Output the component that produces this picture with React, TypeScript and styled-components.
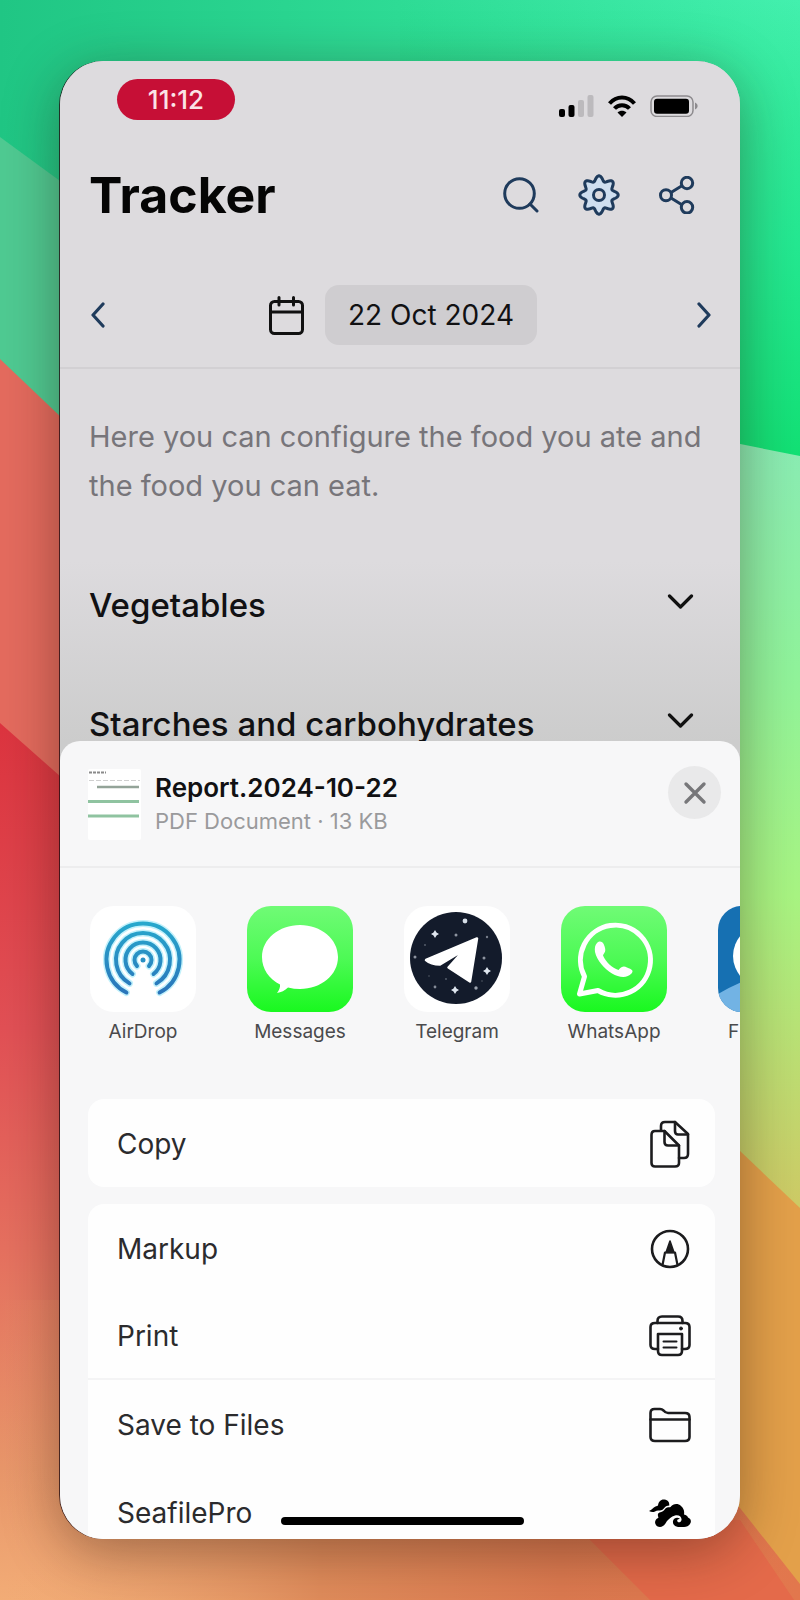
import React from 'react';
import styled, { createGlobalStyle } from 'styled-components';

const GlobalStyle = createGlobalStyle`
  *, *::before, *::after { box-sizing: border-box; }
  body {
    margin: 0;
    font-family: Inter, "Liberation Sans", sans-serif;
    color: #111113;
  }
  button { font: inherit; color: inherit; background: none; border: 0; padding: 0; }
  svg { display: block; flex: none; }
`;

/* ---------- page and wallpaper ---------- */

const Page = styled.div`
  position: relative;
  display: flex;
  height: 100vh;
  padding: 61px 60px;
  overflow: hidden;
`;

const WallpaperSvg = styled.svg`
  position: absolute;
  inset: 0;
  width: 100%;
  height: 100%;
`;

const Phone = styled.main`
  position: relative;
  flex: 1;
  min-width: 0;
  display: flex;
  flex-direction: column;
  overflow: hidden;
  border-radius: 44px;
  background: #dddbde;
  box-shadow: -1px 0 0 rgba(30, 10, 15, 0.75), 0 12px 56px rgba(40, 20, 10, 0.4);
`;

/* ---------- dimmed app screen ---------- */

const Screen = styled.section`
  flex: none;
  background: linear-gradient(#dddbde 0, #dddbde 500px, #cccccc 680px);
`;

const StatusBar = styled.header`
  display: flex;
  align-items: center;
  justify-content: space-between;
  padding: 18px 42px 0 57px;
`;

const TimePill = styled.div`
  width: 118px;
  height: 41px;
  border-radius: 21px;
  background: #c60f36;
  color: #fbe3e6;
  font-size: 26px;
  font-weight: 500;
  line-height: 41px;
  text-align: center;
`;

const StatusIcons = styled.div`
  display: flex;
  align-items: center;
  gap: 14px;
  padding-top: 12px;
`;

const TitleRow = styled.div`
  display: flex;
  align-items: center;
  justify-content: space-between;
  height: 72px;
  margin-top: 39px;
  padding: 0 45px 0 29px;
`;

const Title = styled.h1`
  margin: 0;
  font-size: 50px;
  font-weight: 700;
  line-height: 60px;
  color: #050505;
`;

const Actions = styled.div`
  display: flex;
  align-items: center;
  gap: 39px;
`;

const IconButton = styled.button`
  display: flex;
  color: #1f3b5c;
`;

const DateRow = styled.div`
  display: flex;
  align-items: center;
  justify-content: space-between;
  height: 106px;
  margin-top: 32px;
  padding: 0 28px 0 30px;
  border-bottom: 2px solid #d2d0d3;
`;

const DateGroup = styled.div`
  display: flex;
  align-items: center;
  gap: 21px;
  padding-left: 4px;
`;

const DateButton = styled.button`
  height: 60px;
  padding: 0 23px;
  border-radius: 14px;
  background: #cfcdd0;
  font-size: 28px;
  line-height: 60px;
`;

const Intro = styled.p`
  margin: 0;
  padding: 43px 20px 0 29px;
  font-size: 29px;
  line-height: 49px;
  color: #77757a;
`;

const Section = styled.button`
  display: flex;
  align-items: center;
  justify-content: space-between;
  width: 100%;
  height: 119px;
  padding: 0 46px 0 29px;
  font-size: 33px;
  font-weight: 500;
  line-height: 40px;
  text-align: left;

  svg { margin-bottom: 6px; }
`;

const Sections = styled.div`
  padding-top: 35px;
`;

/* ---------- share sheet ---------- */

const Sheet = styled.section`
  position: relative;
  flex: 1;
  min-height: 0;
  display: flex;
  flex-direction: column;
  margin-top: -42px;
  border-radius: 20px 20px 0 0;
  background: #f7f7f8;
`;

const SheetHeader = styled.header`
  flex: none;
  display: flex;
  align-items: flex-start;
  height: 127px;
  padding: 25px 19px 0 28px;
  border-bottom: 2px solid #ededee;
`;

const FileInfo = styled.div`
  flex: 1;
  padding-left: 14px;
`;

const FileName = styled.h2`
  margin: 0;
  padding-top: 5px;
  font-size: 26px;
  font-weight: 600;
  line-height: 34px;
`;

const FileMeta = styled.p`
  margin: 0;
  font-size: 22px;
  line-height: 32px;
  color: #9a9a9c;
`;

const Close = styled.button`
  display: grid;
  place-items: center;
  width: 53px;
  height: 53px;
  border-radius: 50%;
  background: #e9e9ea;
  color: #77777a;
`;

const AppRow = styled.nav`
  flex: none;
  display: flex;
  gap: 51px;
  height: 231px;
  padding: 38px 0 0 30px;
  overflow: hidden;
`;

const AppButton = styled.button<{ $cut?: boolean }>`
  flex: none;
  display: flex;
  flex-direction: column;
  align-items: ${(p) => (p.$cut ? 'flex-start' : 'center')};
  width: 106px;
  font-size: 19px;
  line-height: 28px;
  color: #4a4a4c;

  span { padding: 6px 0 0 ${(p) => (p.$cut ? '10px' : '0')}; }
`;

const Group = styled.div<{ $fill?: boolean }>`
  flex: ${(p) => (p.$fill ? '1' : 'none')};
  min-height: 0;
  margin: 0 25px ${(p) => (p.$fill ? '0' : '17px')} 28px;
  border-radius: ${(p) => (p.$fill ? '16px 16px 0 0' : '16px')};
  background: #fefefe;
  overflow: hidden;
`;

const ActionRow = styled.button<{ $line?: boolean }>`
  display: flex;
  align-items: center;
  justify-content: space-between;
  width: 100%;
  height: 88px;
  padding: 2px 24px 0 29px;
  border-bottom: ${(p) => (p.$line ? '2px solid #f4f4f5' : '0')};
  font-size: 28px;
  line-height: 36px;
  color: #2b2b2d;
  text-align: left;
`;

const HomeIndicator = styled.div`
  position: absolute;
  left: 50%;
  bottom: 14px;
  width: 243px;
  height: 8px;
  margin-left: -119px;
  border-radius: 4px;
  background: #000;
`;

/* ---------- drawings ---------- */

const Wallpaper = () => (
  <WallpaperSvg viewBox="0 0 800 1600" preserveAspectRatio="none" aria-hidden="true">
    <defs>
      <linearGradient id="wTop" x1="0" y1="0" x2="1" y2="0">
        <stop offset="0" stopColor="#20c684" />
        <stop offset="0.5" stopColor="#2edb95" />
        <stop offset="1" stopColor="#43f0ae" />
      </linearGradient>
      <linearGradient id="wTopRight" x1="0" y1="0" x2="0" y2="1">
        <stop offset="0" stopColor="#14de76" stopOpacity="0" />
        <stop offset="0.5" stopColor="#1de68a" stopOpacity="0.8" />
        <stop offset="1" stopColor="#10df70" />
      </linearGradient>
      <linearGradient id="wRed" x1="0" y1="720" x2="0" y2="1600" gradientUnits="userSpaceOnUse">
        <stop offset="0" stopColor="#dc343f" />
        <stop offset="0.35" stopColor="#e15055" />
        <stop offset="0.6" stopColor="#e5705f" />
        <stop offset="0.85" stopColor="#e8966a" />
        <stop offset="1" stopColor="#f2ac76" />
      </linearGradient>
      <linearGradient id="wLime" x1="0" y1="440" x2="0" y2="1200" gradientUnits="userSpaceOnUse">
        <stop offset="0" stopColor="#8aecb4" />
        <stop offset="0.3" stopColor="#90f39b" />
        <stop offset="0.6" stopColor="#a8f482" />
        <stop offset="1" stopColor="#cdcb66" />
      </linearGradient>
      <linearGradient id="wBottom" x1="0" y1="0" x2="1" y2="0">
        <stop offset="0" stopColor="#f0a873" stopOpacity="0" />
        <stop offset="0.4" stopColor="#e08c5b" />
        <stop offset="0.7" stopColor="#dc7a50" />
        <stop offset="1" stopColor="#e2774d" />
      </linearGradient>
    </defs>
    <rect width="800" height="1600" fill="url(#wTop)" />
    <rect x="400" width="400" height="480" fill="url(#wTopRight)" />
    <path d="M0 137L400 430V800H0Z" fill="#4fca92" />
    <path d="M0 359L400 740V1000H0Z" fill="#e46b5e" />
    <path d="M0 723L400 1077V1600H0Z" fill="url(#wRed)" />
    <path d="M400 376L800 456V1300H400Z" fill="url(#wLime)" />
    <path d="M400 828L800 1208V1600H400Z" fill="#e3a04a" />
    <path d="M0 1300H400L740 1508L800 1584V1600H0Z" fill="url(#wBottom)" />
    <path d="M560 1510L740 1520L794 1600H650Z" fill="#e46a4a" />
  </WallpaperSvg>
);

const SignalIcon = () => (
  <svg width="35" height="22" viewBox="0 0 35 22">
    <rect x="0" y="14" width="6" height="8" rx="2" />
    <rect x="9.500" y="10" width="6" height="12" rx="2" />
    <rect x="19" y="5" width="6" height="17" rx="2" fill="#bcbabd" />
    <rect x="28.500" y="0" width="6" height="22" rx="2" fill="#bcbabd" />
  </svg>
);

const WifiIcon = () => (
  <svg width="28" height="22" viewBox="0 0 28 22" fill="none" stroke="#000" strokeWidth="4">
    <path d="M1.500 8.500C8.500 .5 19.500 .5 26.500 8.500" />
    <path d="M6.500 13.500C10.500 9 17.500 9 21.500 13.500" />
    <path d="M14 22L9.500 17.500C12 15 16 15 18.500 17.500Z" fill="#000" stroke="none" />
  </svg>
);

const BatteryIcon = () => (
  <svg width="48" height="22" viewBox="0 0 48 22">
    <rect x="1" y="1" width="42" height="20.500" rx="6" fill="none" stroke="#8d8b8e" strokeWidth="1.500" />
    <rect x="4" y="3.800" width="35" height="15" rx="3" />
    <path d="M45 7.500C48.500 9 48.500 13 45 14.500Z" fill="#8d8b8e" />
  </svg>
);

const SearchIcon = () => (
  <svg width="36" height="36" viewBox="0 0 36 36" fill="none" stroke="currentColor" strokeWidth="3" strokeLinecap="round">
    <circle cx="16.500" cy="16.500" r="14.800" />
    <path d="M27 27L34 34" />
  </svg>
);

const gearPath = (() => {
  const points: string[] = [];
  for (let i = 0; i < 160; i++) {
    const a = (i / 160) * Math.PI * 2;
    const r = 16.6 + 2.6 * Math.cos(8 * a);
    points.push(`${(21 + r * Math.sin(a)).toFixed(2)} ${(21 - r * Math.cos(a)).toFixed(2)}`);
  }
  return `M${points.join('L')}Z`;
})();

const GearIcon = () => (
  <svg width="42" height="42" viewBox="0 0 42 42" fill="none" stroke="currentColor" strokeWidth="3" strokeLinejoin="round">
    <path d={gearPath} fill="#cfdff0" />
    <circle cx="21" cy="21" r="5.500" fill="#dddbde" />
  </svg>
);

const ShareIcon = () => (
  <svg width="36" height="38" viewBox="0 0 36 38" fill="none" stroke="currentColor" strokeWidth="3">
    <path d="M12 16.500L22.500 10M12 22L22.500 28.500" />
    <circle cx="7" cy="19.300" r="5.500" />
    <circle cx="28" cy="7" r="5.700" />
    <circle cx="28" cy="31.300" r="5.700" />
  </svg>
);

const SideChevron = ({ d }: { d: string }) => (
  <svg width="16" height="26" viewBox="0 0 16 26" fill="none" stroke="currentColor" strokeWidth="3.200" strokeLinecap="round" strokeLinejoin="round">
    <path d={d} />
  </svg>
);

const CalendarIcon = () => (
  <svg width="35" height="39" viewBox="0 0 35 39" fill="none" stroke="#111" strokeWidth="3" strokeLinecap="round">
    <rect x="1.500" y="5.500" width="32" height="32" rx="4" />
    <path d="M1.500 16H33.500M10 1.500V9M24.500 1.500V9" />
  </svg>
);

const DownChevron = () => (
  <svg width="27" height="16" viewBox="0 0 27 16" fill="none" stroke="#111" strokeWidth="3.200" strokeLinecap="round" strokeLinejoin="round">
    <path d="M2.500 2L13.500 13L24.500 2" />
  </svg>
);

const Thumbnail = () => (
  <svg width="53" height="74" viewBox="0 -3 53 74">
    <rect width="53" height="71" rx="2" fill="#fff" />
    <path d="M1 3.500H18" stroke="#8a8a8a" strokeWidth="2" strokeDasharray="3 1" />
    <path d="M1 11.500H52" stroke="#cfcfcf" strokeWidth="1" strokeDasharray="5 2" />
    <path d="M9 18H51" stroke="#93a398" strokeWidth="2.500" />
    <path d="M0 32.500H51M0 47H51" stroke="#8fc3a0" strokeWidth="3" />
  </svg>
);

const CloseIcon = () => (
  <svg width="24" height="24" viewBox="0 0 24 24" fill="none" stroke="currentColor" strokeWidth="3.400" strokeLinecap="round">
    <path d="M3 3L21 21M21 3L3 21" />
  </svg>
);

const arc = (r: number, deg: number) => {
  const a = (deg * Math.PI) / 180;
  const dx = r * Math.sin(a);
  const y = 54 + r * Math.cos(a);
  return `M${53 - dx} ${y}A${r} ${r} 0 1 1 ${53 + dx} ${y}`;
};

const airdropArcs = [arc(36.5, 27), arc(27, 30), arc(17.5, 37), arc(8.5, 45)];

const AirDropIcon = () => (
  <svg width="106" height="106" viewBox="0 0 106 106">
    <defs>
      <linearGradient id="air" x1="0" y1="16" x2="0" y2="88" gradientUnits="userSpaceOnUse">
        <stop offset="0" stopColor="#27a9cd" />
        <stop offset="1" stopColor="#2a74ba" />
      </linearGradient>
    </defs>
    <rect width="106" height="106" rx="24" fill="#fff" />
    <g fill="none" strokeLinecap="round">
      {airdropArcs.map((d) => <path key={`g${d}`} d={d} stroke="#c2f1fb" strokeWidth="7" />)}
      {airdropArcs.map((d) => <path key={d} d={d} stroke="url(#air)" strokeWidth="4" />)}
    </g>
    <circle cx="53" cy="54" r="2.500" fill="#2790c4" />
  </svg>
);

const MessagesIcon = () => (
  <svg width="106" height="106" viewBox="0 0 106 106">
    <defs>
      <linearGradient id="green" x1="0" y1="0" x2="0" y2="1">
        <stop offset="0" stopColor="#70fb76" />
        <stop offset="0.5" stopColor="#4dfa55" />
        <stop offset="1" stopColor="#19f81f" />
      </linearGradient>
    </defs>
    <rect width="106" height="106" rx="24" fill="url(#green)" />
    <path d="M53 19C74 19 91 33 91 51S74 83 53 83C49 83 45 82.500 41 81.500C38 84.500 34 86.500 30 87C32 84.500 33.500 81 33 78.500C22 73 15 63 15 51C15 33 32 19 53 19Z" fill="#fff" />
  </svg>
);

const stars: [number, number, number][] = [
  [61, 15, 2.4], [52, 29, 1.5], [11, 51, 1.5], [80, 52, 1.5], [72, 82, 1.7],
  [31, 81, 1.4], [83, 31, 1.2], [21, 39, 0.9], [42, 73, 0.9], [25, 70, 0.8], [78, 75, 0.8],
];

const TelegramIcon = () => (
  <svg width="106" height="106" viewBox="0 0 106 106">
    <rect width="106" height="106" rx="24" fill="#fff" />
    <circle cx="52" cy="52" r="46" fill="#131b2b" />
    <g fill="#dfe6ef">
      {stars.map(([x, y, r]) => <circle key={`${x}-${y}`} cx={x} cy={y} r={r} opacity={r / 2.5} />)}
      <path d="M31 24L32.500 26.500L35 28L32.500 29.500L31 32L29.500 29.500L27 28L29.500 26.500ZM83 61L84.500 63.500L87 65L84.500 66.500L83 69L81.500 66.500L79 65L81.500 63.500ZM51 80L52.500 82.500L55 84L52.500 85.500L51 88L49.500 85.500L47 84L49.500 82.500Z" />
    </g>
    <path d="M22 54L73 32.500L66 75.500L44.500 61.500L60 44L36 58.500Q27 58.500 22 54Z" fill="#fff" stroke="#fff" strokeWidth="2.500" strokeLinejoin="round" />
  </svg>
);

const WhatsAppIcon = () => (
  <svg width="106" height="106" viewBox="0 0 106 106">
    <rect width="106" height="106" rx="24" fill="url(#green)" />
    <path d="M18.500 88L23.500 70.500A35 35 0 1 1 37 84.500Z" fill="none" stroke="#fff" strokeWidth="5" strokeLinejoin="round" />
    <path d="M36 37C40 33.500 43 37 44 42C45 46 43 47 42 49.500C45 56 51 62 57.500 64C61 60 63 60 66 61.500C71 63.500 73 64.500 70.500 67.500C66 72.500 58 71.500 51 67.500C43 62.500 36 54.500 34 46C33.500 42 34 39 36 37Z" fill="#fff" />
  </svg>
);

const BlueAppIcon = () => (
  <svg width="106" height="106" viewBox="0 0 106 106">
    <defs>
      <clipPath id="tile"><rect width="106" height="106" rx="24" /></clipPath>
    </defs>
    <g clipPath="url(#tile)">
      <rect width="106" height="106" fill="#1670b2" />
      <path d="M0 88Q10 82 24 76H106V106H0Z" fill="#72b3e4" />
      <circle cx="46" cy="50" r="31" fill="#fff" />
    </g>
  </svg>
);

const lineIcon = { fill: 'none', stroke: '#1c1c1e', strokeWidth: 2.6, strokeLinejoin: 'round', strokeLinecap: 'round' } as const;

const CopyIcon = () => (
  <svg width="42" height="48" viewBox="0 0 42 48" {...lineIcon}>
    <path d="M12 10V6Q12 2 16 2H26L39 14V34Q39 38 35 38H30" />
    <path d="M26 2V11Q26 14.500 29 14.500H39" />
    <path d="M6 11H15.500L30 25.500V43Q30 46.500 26 46.500H6Q2.500 46.500 2.500 43V15Q2.500 11 6 11Z" />
    <path d="M15.500 11V22Q15.500 25.500 19 25.500H30" />
  </svg>
);

const MarkupIcon = () => (
  <svg width="42" height="40" viewBox="0 0 42 40" {...lineIcon}>
    <circle cx="21" cy="20" r="18" />
    <path d="M13.500 36L16 23.500H26L28.500 36" strokeWidth="2.200" />
    <path d="M21 12L25 23.500H17Z" fill="#1c1c1e" strokeWidth="1.600" />
  </svg>
);

const PrintIcon = () => (
  <svg width="42" height="42" viewBox="0 0 42 42" {...lineIcon}>
    <path d="M9 34H6Q1.500 34 1.500 30V12Q1.500 8 6 8H36Q40.500 8 40.500 12V30Q40.500 34 36 34H33" />
    <path d="M8.500 8V6Q8.500 1.500 13 1.500H29Q33.500 1.500 33.500 6V8" />
    <path d="M9 19H33V36Q33 40 29 40H13Q9 40 9 36Z" />
    <path d="M14.500 26.500H27.500M14.500 32.500H27.500" strokeWidth="2" />
    <circle cx="32" cy="13.500" r="1.500" fill="#1c1c1e" strokeWidth="1" />
  </svg>
);

const FolderIcon = () => (
  <svg width="42" height="36" viewBox="0 0 42 36" {...lineIcon}>
    <path d="M1.500 30V6Q1.500 2 5.500 2H11Q13 2 14.500 3.500Q16.500 6 19 6H36Q40.500 6 40.500 10V30Q40.500 34 36 34H6Q1.500 34 1.500 30Z" />
    <path d="M1.500 12.500H40.500" />
  </svg>
);

const CloudIcon = () => (
  <svg width="42" height="28" viewBox="0 0 42 28">
    <path d="M0 12C3 11 4 8.500 6.500 7.500C7.500 7 8.500 7 9 6.500C9.500 2.500 12 0 15.500 .5C19 .8 20.500 3.500 20.300 6.500C16 6.500 15.500 9.500 13 11C10 12 8 11 6 12.500C4 13.500 2 13 0 12Z" />
    <path d="M10.500 13.500C13 13 15 12 16 10C18 7.500 20 8.500 21.500 8C24 4.500 29 4 32 7C35 9.500 35.500 12.500 35 15.500C37.500 16 38.500 17 39 18.500C41.500 19.500 42.500 21.500 41.500 24C40.500 26.500 38 28 35 28H29C25.500 27.500 23.500 25 24 22C25 18.500 29 18 31 20C29 19.500 27.500 21 28.500 22.500C29.500 24 32 23.500 32.500 21C33 17.500 29.500 15.500 26 16.500C22 17.500 20 20 18 22C16.500 24.500 14.500 28 11 28C7.500 28 5 24.500 6.500 21.500C7 20 8.500 19.500 9.500 18.500C8.500 16.500 8.500 14.500 10.500 13.500Z" />
  </svg>
);

/* ---------- data ---------- */

const apps = [
  { name: 'AirDrop', Icon: AirDropIcon },
  { name: 'Messages', Icon: MessagesIcon },
  { name: 'Telegram', Icon: TelegramIcon },
  { name: 'WhatsApp', Icon: WhatsAppIcon },
  { name: 'F', Icon: BlueAppIcon, cut: true },
];

const fileActions = [
  { name: 'Markup', Icon: MarkupIcon },
  { name: 'Print', Icon: PrintIcon, line: true },
  { name: 'Save to Files', Icon: FolderIcon },
  { name: 'SeafilePro', Icon: CloudIcon },
];

export default function App() {
  return (
    <Page>
      <GlobalStyle />
      <Wallpaper />
      <Phone>
        <Screen>
          <StatusBar>
            <TimePill>11:12</TimePill>
            <StatusIcons>
              <SignalIcon />
              <WifiIcon />
              <BatteryIcon />
            </StatusIcons>
          </StatusBar>
          <TitleRow>
            <Title>Tracker</Title>
            <Actions>
              <IconButton aria-label="Search"><SearchIcon /></IconButton>
              <IconButton aria-label="Settings"><GearIcon /></IconButton>
              <IconButton aria-label="Share"><ShareIcon /></IconButton>
            </Actions>
          </TitleRow>
          <DateRow>
            <IconButton aria-label="Previous day"><SideChevron d="M13 2L3 13L13 24" /></IconButton>
            <DateGroup>
              <CalendarIcon />
              <DateButton>22 Oct 2024</DateButton>
            </DateGroup>
            <IconButton aria-label="Next day"><SideChevron d="M3 2L13 13L3 24" /></IconButton>
          </DateRow>
          <Intro>Here you can configure the food you ate and the food you can eat.</Intro>
          <Sections>
            <Section>Vegetables<DownChevron /></Section>
            <Section>Starches and carbohydrates<DownChevron /></Section>
          </Sections>
        </Screen>
        <Sheet>
          <SheetHeader>
            <Thumbnail />
            <FileInfo>
              <FileName>Report.2024-10-22</FileName>
              <FileMeta>PDF Document · 13 KB</FileMeta>
            </FileInfo>
            <Close aria-label="Close"><CloseIcon /></Close>
          </SheetHeader>
          <AppRow>
            {apps.map(({ name, Icon, cut }) => (
              <AppButton key={name} $cut={cut}>
                <Icon />
                <span>{name}</span>
              </AppButton>
            ))}
          </AppRow>
          <Group>
            <ActionRow>Copy<CopyIcon /></ActionRow>
          </Group>
          <Group $fill>
            {fileActions.map(({ name, Icon, line }) => (
              <ActionRow key={name} $line={line}>{name}<Icon /></ActionRow>
            ))}
          </Group>
        </Sheet>
        <HomeIndicator />
      </Phone>
    </Page>
  );
}
